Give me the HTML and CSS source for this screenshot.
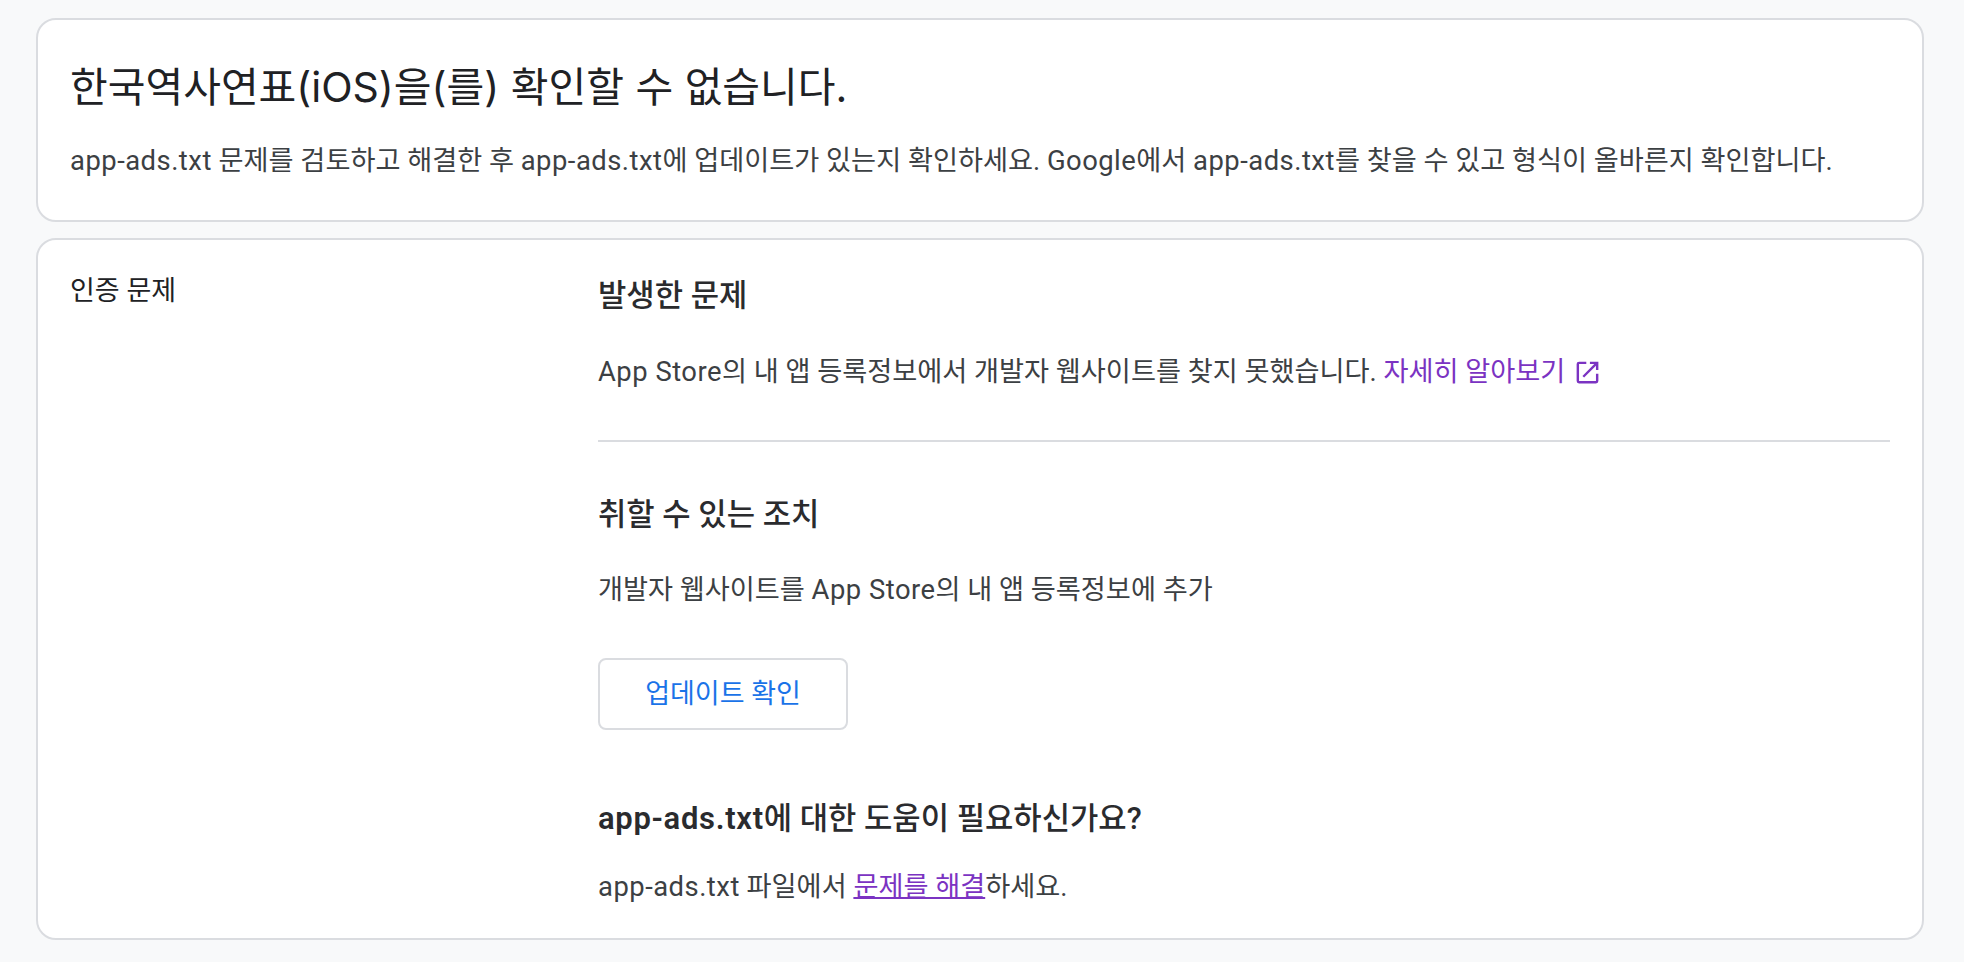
FILE: index.html
```html
<!DOCTYPE html>
<html lang="ko">
<head>
<meta charset="utf-8">
<title>app-ads.txt</title>
<link rel="stylesheet" href="styles.css">
</head>
<body>
<main class="page">
  <section class="card summary">
    <h1 class="title">한국역사연표(iOS)을(를) 확인할 수 없습니다.</h1>
    <p class="text"><span class="lat">app-ads.txt</span> 문제를 검토하고 해결한 후 <span class="lat">app-ads.txt</span>에 업데이트가 있는지 확인하세요. <span class="lat">Google</span>에서 <span class="lat">app-ads.txt</span>를 찾을 수 있고 형식이 올바른지 확인합니다.</p>
  </section>
  <section class="card detail">
    <div class="label">인증 문제</div>
    <div class="content">
      <div class="block first">
        <h2 class="subhead">발생한 문제</h2>
        <p class="text"><span class="lat">App Store</span>의 내 앱 등록정보에서 개발자 웹사이트를 찾지 못했습니다. <a class="link" href="#">자세히 알아보기<svg class="ext" viewBox="0 0 24 24" aria-hidden="true"><path d="M5 3h6v2H5v14h14v-6h2v6a2 2 0 0 1-2 2H5a2 2 0 0 1-2-2V5a2 2 0 0 1 2-2zm9 0h7v7h-2V6.4l-9.8 9.8-1.4-1.4L17.6 5H14V3z"/></svg></a></p>
      </div>
      <div class="block">
        <h2 class="subhead tight">취할 수 있는 조치</h2>
        <p class="text">개발자 웹사이트를 <span class="lat">App Store</span>의 내 앱 등록정보에 추가</p>
        <button class="btn" type="button">업데이트 확인</button>
        <h3 class="helphead"><b>app-ads.txt</b>에 대한 도움이 필요하신가요?</h3>
        <p class="text"><span class="lat">app-ads.txt</span> 파일에서 <a class="link under" href="#">문제를 해결</a>하세요.</p>
      </div>
    </div>
  </section>
</main>
</body>
</html>
```
FILE: styles.css
```css
* { box-sizing: border-box; }
html, body { margin: 0; height: 100%; }
body {
  background: #f8f9fa;
  color: #3c4043;
  font-family: Roboto, "Noto Sans CJK KR", sans-serif;
  font-size: 27.2px;
  overflow: hidden;
}
.page {
  display: flex;
  flex-direction: column;
  gap: 16px;
  padding: 18px 40px 0 36px;
}
.card {
  background: #fff;
  border: 2px solid #dadce0;
  border-radius: 20px;
}
.summary { height: 204px; padding: 39px 32px 0; }
.title {
  margin: 0 0 28px;
  font-family: Inter, "Noto Sans CJK KR", sans-serif;
  font-size: 41px;
  line-height: 56px;
  font-weight: 400;
  color: #202124;
}
.text { margin: 0; font-size: 27.2px; line-height: 36px; }
.lat { font-size: 27.4px; letter-spacing: 0.49px; }
.detail { height: 702px; display: flex; padding: 32px 32px 0; }
.label { width: 528px; flex: none; padding-top: 1px; font-size: 27px; line-height: 36px; color: #202124; }
.content { flex: 1; }
.block.first { padding-bottom: 50px; border-bottom: 2px solid #dadce0; margin-bottom: 55px; padding-top: 6px; }
.subhead { margin: 0 0 40px; font-size: 30.8px; line-height: 36px; font-weight: 500; color: #2a2b2e; }
.subhead.tight { margin-bottom: 39px; }
.btn {
  display: block;
  width: 250px;
  height: 72px;
  margin: 50px 0 71px;
  background: #fff;
  border: 2px solid #dadce0;
  border-radius: 8px;
  color: #1a73e8;
  font: 400 27px/36px Roboto, "Noto Sans CJK KR", sans-serif;
}
.helphead { margin: 0 0 32px; font-size: 30.8px; line-height: 36px; font-weight: 500; color: #2a2b2e; }
.helphead b { font-size: 31px; font-weight: 600; letter-spacing: 0.68px; }
.link { color: #7b33c2; text-decoration: none; }
.under { text-decoration: underline; text-decoration-thickness: 2px; text-decoration-skip-ink: none; }
.ext { width: 29px; height: 29px; margin-left: 8px; fill: #7b33c2; vertical-align: -6px; }
```
